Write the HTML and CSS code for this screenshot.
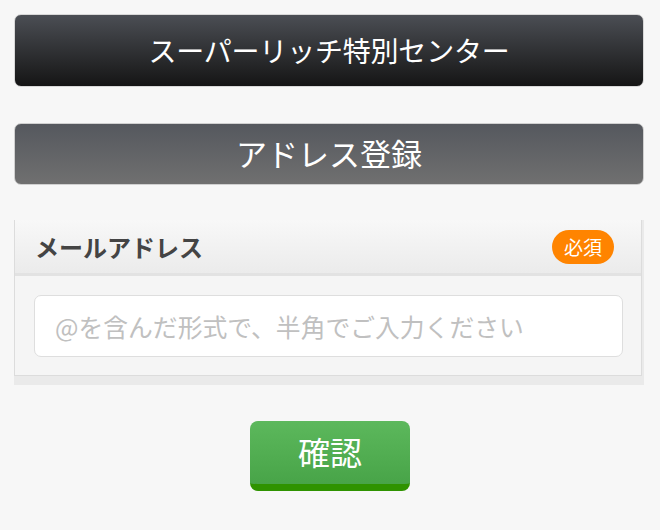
FILE: index.html
```html
<!DOCTYPE html>
<html lang="ja">
<head>
<meta charset="utf-8">
<link rel="stylesheet" href="styles.css">
</head>
<body>
<div class="page">
  <header class="site-bar">スーパーリッチ特別センター</header>
  <h1 class="title-bar">アドレス登録</h1>
  <div class="card-wrap">
    <section class="card">
      <div class="card-head">
        <span class="label">メールアドレス</span>
        <span class="badge">必須</span>
      </div>
      <div class="card-body">
        <input class="field" type="text" placeholder="@を含んだ形式で、半角でご入力ください">
      </div>
    </section>
  </div>
  <div class="actions">
    <button class="confirm" type="button">確認</button>
  </div>
</div>
</body>
</html>
```

FILE: styles.css
```css
html, body {
  margin: 0;
  padding: 0;
  background: #f7f7f7;
  font-family: "Noto Sans CJK JP", "Noto Sans", sans-serif;
}
.page {
  padding: 14px 16px 0 14px;
  display: flex;
  flex-direction: column;
}
.site-bar {
  height: 73px;
  box-sizing: border-box;
  border: 1px solid #d8d8d8;
  border-radius: 7px;
  background: linear-gradient(#4b4e54, #151515);
  color: #fff;
  font-size: 28px;
  display: flex;
  align-items: center;
  justify-content: center;
  letter-spacing: -0.2px;
  padding-bottom: 2px;
}
.title-bar {
  margin: 36px 0 0;
  height: 62px;
  box-sizing: border-box;
  border: 1px solid #d0d0d0;
  border-radius: 7px;
  background: linear-gradient(#55585e, #707070);
  color: #fff;
  font-size: 31px;
  font-weight: normal;
  display: flex;
  align-items: center;
  justify-content: center;
  padding-bottom: 4px;
}
.card-wrap {
  margin-top: 35px;
  background: #eaeaea;
  padding: 0 2px 9px 0;
}
.card {
  border: 1px solid #dcdcdc;
  border-top: none;
  background: #f5f5f5;
}
.card-head {
  height: 56px;
  box-sizing: border-box;
  display: flex;
  align-items: center;
  justify-content: space-between;
  padding: 0 27px 0 20px;
  background: linear-gradient(#f8f8f8, #ebebeb);
  border-bottom: 3px solid #e2e2e2;
}
.label {
  font-size: 24px;
  font-weight: bold;
  color: #444;
}
.badge {
  background: #ff8400;
  color: #fff;
  font-size: 19px;
  border-radius: 17px;
  height: 34px;
  padding: 0 12px 1px;
  box-sizing: border-box;
  display: flex;
  align-items: center;
}
.card-body {
  padding: 19px 18px 18px 19px;
}
.field {
  display: block;
  width: 100%;
  box-sizing: border-box;
  height: 62px;
  border: 1px solid #dedede;
  border-radius: 7px;
  background: #fff;
  padding: 0 20px;
  font-family: "Noto Sans CJK JP", "Noto Sans", sans-serif;
  font-size: 24.8px;
  color: #333;
  outline: none;
}
.field::placeholder {
  color: #c0c0c0;
}
.actions {
  display: flex;
  justify-content: center;
  margin-top: 36px;
  padding-left: 2px;
}
.confirm {
  width: 160px;
  height: 70px;
  box-sizing: border-box;
  border: none;
  border-bottom: 7px solid #2f9300;
  border-radius: 8px;
  background: linear-gradient(#5cb85c, #48a448);
  color: #fff;
  font-family: "Noto Sans CJK JP", "Noto Sans", sans-serif;
  font-size: 32px;
  padding: 0 0 4px;
}
```
